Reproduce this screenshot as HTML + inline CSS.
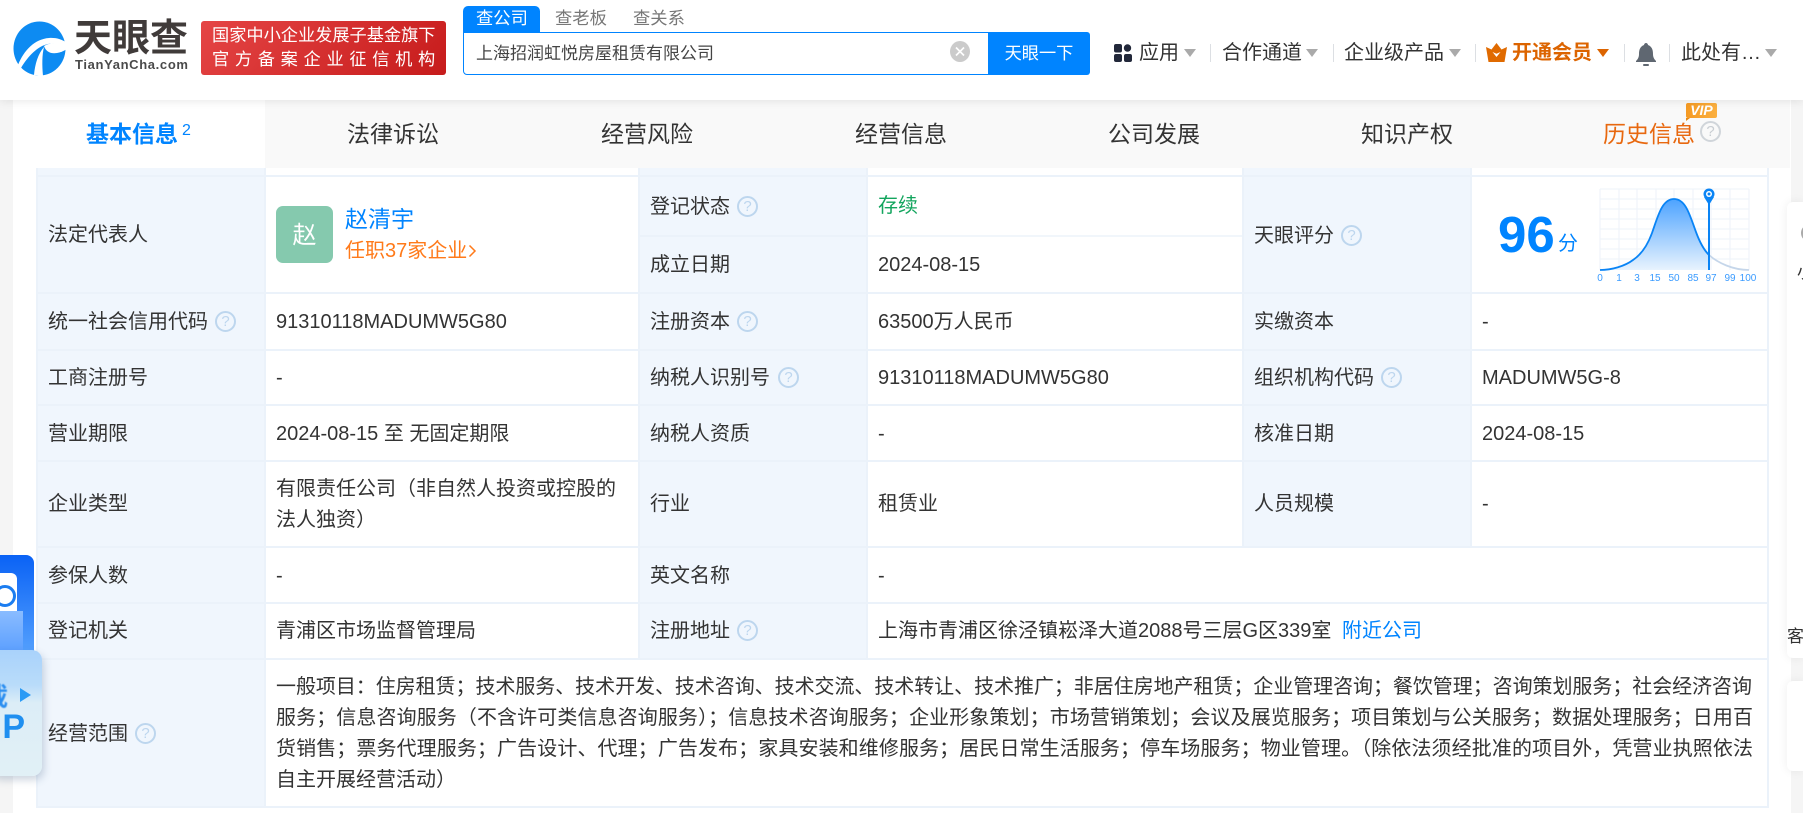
<!DOCTYPE html>
<html lang="zh-CN"><head><meta charset="utf-8"><title>天眼查</title>
<style>
*{box-sizing:border-box;margin:0;padding:0}
html,body{width:1803px;height:813px;overflow:hidden;background:#f5f5f5}
body{position:relative;font-family:"Liberation Sans","Noto Sans CJK SC",sans-serif;font-size:20px;color:#333}
.a{position:absolute}
.t{position:absolute;white-space:nowrap;line-height:30px;height:30px}
.h{position:absolute;width:21px;height:21px;border:2px solid #bdd6ee;border-radius:50%;color:#bdd6ee;font-size:15px;line-height:17px;text-align:center;font-weight:400}
.c{position:absolute;width:0;height:0;border-left:6px solid transparent;border-right:6px solid transparent;border-top:8px solid #aaa;top:49px}
.s{position:absolute;top:44px;width:1px;height:18px;background:#dcdfe3}
.hl{position:absolute;height:2px;background:#ebf2fa}
.vl{position:absolute;width:2px;background:#ebf2fa}
.lb{position:absolute;background:#f0f6fd}
.n{font-size:20px;color:#333}
.tb{font-size:23px;color:#333;text-align:center;width:120px}
</style></head><body>

<div class="a" style="left:13px;top:100px;width:1778px;height:713px;background:#fff"></div>
<!-- tab bar -->
<div class="a" style="left:13px;top:100px;width:1777px;height:68px;background:#f9f9f9"></div>
<div class="a" style="left:13px;top:100px;width:252px;height:68px;background:#fff"></div>
<div class="t" style="left:86px;top:119px;font-size:23px;font-weight:700;color:#0084ff">基本信息</div>
<div class="t" style="left:182px;top:116px;font-size:16px;color:#0084ff">2</div>
<div class="t tb" style="left:333px;top:119px">法律诉讼</div>
<div class="t tb" style="left:587px;top:119px">经营风险</div>
<div class="t tb" style="left:841px;top:119px">经营信息</div>
<div class="t tb" style="left:1094px;top:119px">公司发展</div>
<div class="t tb" style="left:1347px;top:119px">知识产权</div>
<div class="t tb" style="left:1589px;top:119px;color:#e8680f">历史信息</div>
<div class="h" style="left:1700px;top:121px;border-color:#d0d5da;color:#c8cdd2">?</div>
<div class="a" style="left:1686px;top:103px;width:31px;height:15px;background:linear-gradient(90deg,#f59a23,#fbb040);border-radius:2px;color:#fff;font:italic 700 14px/15px 'Liberation Sans',sans-serif;text-align:center">VIP</div>
<div class="a" style="left:1686px;top:118px;width:0;height:0;border-top:3px solid #e88a14;border-right:4px solid transparent"></div>

<!-- table backgrounds -->
<div class="lb" style="left:36px;top:168px;width:228px;height:639px"></div>
<div class="lb" style="left:638px;top:168px;width:229px;height:491px"></div>
<div class="lb" style="left:1242px;top:168px;width:229px;height:378px"></div>
<!-- lines -->
<div class="hl" style="left:36px;top:175px;width:1733px"></div>
<div class="hl" style="left:638px;top:235px;width:229px"></div>
<div class="hl" style="left:867px;top:235px;width:375px;background:#f1f6fb"></div>
<div class="hl" style="left:36px;top:292px;width:1733px"></div>
<div class="hl" style="left:36px;top:349px;width:1733px"></div>
<div class="hl" style="left:36px;top:404px;width:1733px"></div>
<div class="hl" style="left:36px;top:460px;width:1733px"></div>
<div class="hl" style="left:36px;top:546px;width:1733px"></div>
<div class="hl" style="left:36px;top:602px;width:1733px"></div>
<div class="hl" style="left:36px;top:658px;width:1733px"></div>
<div class="hl" style="left:36px;top:806px;width:1733px"></div>
<div class="vl" style="left:36px;top:168px;height:640px"></div>
<div class="vl" style="left:264px;top:168px;height:640px"></div>
<div class="vl" style="left:638px;top:168px;height:491px"></div>
<div class="vl" style="left:866px;top:168px;height:491px"></div>
<div class="vl" style="left:1242px;top:168px;height:379px"></div>
<div class="vl" style="left:1470px;top:168px;height:379px"></div>
<div class="vl" style="left:1767px;top:168px;height:640px"></div>

<!-- column 1 -->
<div class="t" style="left:48px;top:220px">法定代表人</div>
<div class="a" style="left:276px;top:206px;width:57px;height:57px;background:#85c9ae;border-radius:7px;color:#fff;font-size:24px;line-height:59px;text-align:center">赵</div>
<div class="t" style="left:345px;top:204px;font-size:23px;color:#0084ff">赵清宇</div>
<div class="t" style="left:345px;top:236px;color:#ff7a1a">任职37家企业</div>
<svg class="a" style="left:468px;top:244px" width="9" height="14" viewBox="0 0 9 14"><path d="M1.500 1.500L7 7L1.500 12.500" fill="none" stroke="#ff7a1a" stroke-width="1.500"/></svg>
<div class="t" style="left:48px;top:307px">统一社会信用代码</div><div class="h" style="left:215px;top:311px">?</div>
<div class="t" style="left:276px;top:307px">91310118MADUMW5G80</div>
<div class="t" style="left:48px;top:363px">工商注册号</div><div class="t" style="left:276px;top:363px">-</div>
<div class="t" style="left:48px;top:419px">营业期限</div><div class="t" style="left:276px;top:419px">2024-08-15 至 无固定期限</div>
<div class="t" style="left:48px;top:489px">企业类型</div>
<div class="t" style="left:276px;top:474px">有限责任公司（非自然人投资或控股的</div>
<div class="t" style="left:276px;top:505px">法人独资）</div>
<div class="t" style="left:48px;top:561px">参保人数</div><div class="t" style="left:276px;top:561px">-</div>
<div class="t" style="left:48px;top:616px">登记机关</div><div class="t" style="left:276px;top:616px">青浦区市场监督管理局</div>
<div class="t" style="left:48px;top:719px">经营范围</div><div class="h" style="left:135px;top:723px">?</div>

<!-- column 2 -->
<div class="t" style="left:650px;top:192px">登记状态</div><div class="h" style="left:737px;top:196px">?</div>
<div class="t" style="left:878px;top:191px;color:#13a55e">存续</div>
<div class="t" style="left:650px;top:250px">成立日期</div><div class="t" style="left:878px;top:250px">2024-08-15</div>
<div class="t" style="left:650px;top:307px">注册资本</div><div class="h" style="left:737px;top:311px">?</div>
<div class="t" style="left:878px;top:307px">63500万人民币</div>
<div class="t" style="left:650px;top:363px">纳税人识别号</div><div class="h" style="left:778px;top:367px">?</div>
<div class="t" style="left:878px;top:363px">91310118MADUMW5G80</div>
<div class="t" style="left:650px;top:419px">纳税人资质</div><div class="t" style="left:878px;top:419px">-</div>
<div class="t" style="left:650px;top:489px">行业</div><div class="t" style="left:878px;top:489px">租赁业</div>
<div class="t" style="left:650px;top:561px">英文名称</div><div class="t" style="left:878px;top:561px">-</div>
<div class="t" style="left:650px;top:616px">注册地址</div><div class="h" style="left:737px;top:620px">?</div>
<div class="t" style="left:878px;top:616px">上海市青浦区徐泾镇崧泽大道2088号三层G区339室</div>
<div class="t" style="left:1342px;top:616px;color:#0084ff">附近公司</div>

<!-- column 3 -->
<div class="t" style="left:1254px;top:221px">天眼评分</div><div class="h" style="left:1341px;top:225px">?</div>
<div class="t" style="left:1254px;top:307px">实缴资本</div><div class="t" style="left:1482px;top:307px">-</div>
<div class="t" style="left:1254px;top:363px">组织机构代码</div><div class="h" style="left:1381px;top:367px">?</div>
<div class="t" style="left:1482px;top:363px">MADUMW5G-8</div>
<div class="t" style="left:1254px;top:419px">核准日期</div><div class="t" style="left:1482px;top:419px">2024-08-15</div>
<div class="t" style="left:1254px;top:489px">人员规模</div><div class="t" style="left:1482px;top:489px">-</div>

<!-- score -->
<div class="a" style="left:1498px;top:206px;font-size:51px;font-weight:700;line-height:58px;color:#0084ff;white-space:nowrap">96</div>
<div class="t" style="left:1558px;top:229px;color:#0084ff">分</div>
<svg class="a" style="left:1590px;top:180px" width="175" height="110" viewBox="1590 180 175 110">
<defs><linearGradient id="g" x1="0" y1="0" x2="0" y2="1"><stop offset="0" stop-color="#4da3ff"/><stop offset="1" stop-color="#e8f3fe"/></linearGradient></defs>
<g stroke="#f0f5fa" stroke-width="1.300" fill="none">
<path d="M1600 189H1749M1600 199H1749M1600 209H1749M1600 219H1749M1600 229H1749M1600 239H1749M1600 249H1749M1600 259H1749"/>
<path d="M1600 189V270M1619 189V270M1637 189V270M1656 189V270M1674 189V270M1693 189V270M1711 189V270M1730 189V270M1749 189V270"/>
</g>
<path d="M1600 270C1612 270 1625 266 1633 260C1642 254 1648 244 1652 233C1658 216 1662 199 1674 199C1686 199 1690 216 1696 232C1700 243 1704 250 1709 255V270Z" fill="url(#g)"/>
<path d="M1600 270C1612 270 1625 266 1633 260C1642 254 1648 244 1652 233C1658 216 1662 199 1674 199C1686 199 1690 216 1696 232C1700 243 1704 250 1709 255" fill="none" stroke="#0a84f5" stroke-width="1.800"/>
<path d="M1709 255C1718 263 1733 270 1749 270" fill="none" stroke="#c5d6ea" stroke-width="1.800"/>
<path d="M1709 195V270" stroke="#0a84f5" stroke-width="2"/>
<circle cx="1709" cy="194" r="5.500" fill="#0a84f5"/><circle cx="1709" cy="194" r="3" fill="#fff"/><circle cx="1709" cy="194" r="1.500" fill="#0a84f5"/>
<path d="M1704 197L1709 205L1714 197Z" fill="#0a84f5"/>
<g font-family="Liberation Sans,sans-serif" font-size="10" fill="#3a9bff" text-anchor="middle">
<text x="1600" y="281">0</text><text x="1619" y="281">1</text><text x="1637" y="281">3</text><text x="1655" y="281">15</text><text x="1674" y="281">50</text><text x="1693" y="281">85</text><text x="1711" y="281">97</text><text x="1730" y="281">99</text><text x="1748" y="281">100</text></g>
</svg>

<!-- scope -->
<div class="t" style="left:276px;top:672px;width:1477px;letter-spacing:-.055px">一般项目：住房租赁；技术服务、技术开发、技术咨询、技术交流、技术转让、技术推广；非居住房地产租赁；企业管理咨询；餐饮管理；咨询策划服务；社会经济咨询</div>
<div class="t" style="left:276px;top:703px;width:1477px;text-align:justify;text-align-last:justify">服务；信息咨询服务（不含许可类信息咨询服务）；信息技术咨询服务；企业形象策划；市场营销策划；会议及展览服务；项目策划与公关服务；数据处理服务；日用百</div>
<div class="t" style="left:276px;top:734px;width:1477px;text-align:justify;text-align-last:justify">货销售；票务代理服务；广告设计、代理；广告发布；家具安装和维修服务；居民日常生活服务；停车场服务；物业管理。（除依法须经批准的项目外，凭营业执照依法</div>
<div class="t" style="left:276px;top:765px">自主开展经营活动）</div>

<!-- right sidebar -->
<div class="a" style="left:1787px;top:202px;width:16px;height:456px;background:#fff;box-shadow:0 0 10px rgba(0,0,0,.07);border-radius:6px 0 0 6px;overflow:hidden">
<div class="a" style="left:14px;top:22px;width:18px;height:18px;border:3px solid #aaa;border-radius:50%"></div>
<div class="t" style="left:10px;top:56px;font-size:17px">小</div>
<div class="t" style="left:0;top:420px;font-size:17px">客服</div>
</div>
<div class="a" style="left:1787px;top:681px;width:16px;height:90px;background:#fff;box-shadow:0 0 10px rgba(0,0,0,.07);border-radius:6px 0 0 6px"></div>

<!-- left floating -->
<div class="a" style="left:-10px;top:555px;width:44px;height:110px;border-radius:8px;background:linear-gradient(180deg,#0a62f5,#5da8ff);overflow:hidden">
<div class="a" style="left:0;top:56px;width:33px;height:54px;background:linear-gradient(180deg,#8abcff,#4d96ff)"></div>
<div class="a" style="left:0;top:18px;width:27px;height:38px;background:#fff;border-radius:6px 6px 0 0"></div>
<div class="a" style="left:4px;top:30px;width:22px;height:22px;border:3px solid #1c7df0;border-radius:50%"></div>
</div>
<div class="a" style="left:-10px;top:650px;width:52px;height:126px;border-radius:10px;background:linear-gradient(180deg,#a9d2fb 0,#b9dcfa 28%,#dcedf7 42%,#e1f0f6 100%);box-shadow:2px 4px 8px rgba(60,90,130,.25);overflow:hidden">
<div class="a" style="left:-8px;top:32px;font-size:26px;font-weight:700;line-height:30px;color:#2b8ef0;filter:blur(.6px)">载</div>
<div class="a" style="left:30px;top:38px;width:0;height:0;border-left:11px solid #2b9bf5;border-top:7px solid transparent;border-bottom:7px solid transparent"></div>
<div class="a" style="left:-7px;top:59px;font-size:34px;font-weight:700;line-height:36px;color:#1f8ff0;white-space:nowrap;width:42px;text-align:right">P</div>
</div>

<!-- header -->
<div class="a" style="left:0;top:0;width:1803px;height:100px;background:#fff;box-shadow:0 2px 8px rgba(0,0,0,.08)"></div>
<svg class="a" style="left:13px;top:21px" width="54" height="55" viewBox="0 0 54 55">
<ellipse cx="26.500" cy="27.500" rx="26" ry="27" fill="#0d8bf2"/>
<path d="M5 44C11 29 22 18 36 17C42 16.500 49 18 54 22V25C47 22 41 22 35 23C25 25 15 35 8 47Z" fill="#fff"/>
<path d="M31 25C33 31 38 33 44 32C47 31.500 51 30 54 28V24C47 21.500 38 21 31 25Z" fill="#fff"/>
<path d="M21 54C22 43 25 33 31 26C29 34 29 44 30 55Z" fill="#fff"/>
</svg>
<div class="a" style="left:74px;top:17px;font-size:38px;font-weight:700;line-height:44px;color:#403b3a;white-space:nowrap">天眼查</div>
<div class="a" style="left:75px;top:57px;font-size:13px;line-height:16px;letter-spacing:.65px;color:#4a4a4a;font-weight:700;white-space:nowrap">TianYanCha.com</div>
<div class="a" style="left:201px;top:21px;width:245px;height:54px;border-radius:3px;background:linear-gradient(135deg,#e54545,#c61b1b);color:#fff"></div>
<div class="t" style="left:212px;top:20px;font-size:17.200px;color:#fff">国家中小企业发展子基金旗下</div>
<div class="t" style="left:212px;top:44px;font-size:17.200px;color:#fff;letter-spacing:5.700px">官方备案企业征信机构</div>

<div class="a" style="left:463px;top:6px;width:77px;height:27px;background:#0084ff;border-radius:5px 5px 0 0"></div>
<div class="t" style="left:476px;top:3px;font-size:17.300px;color:#fff">查公司</div>
<div class="t" style="left:555px;top:3px;font-size:17.300px;color:#777">查老板</div>
<div class="t" style="left:633px;top:3px;font-size:17.300px;color:#777">查关系</div>
<div class="a" style="left:463px;top:32px;width:528px;height:43px;border:1px solid #0084ff;border-radius:0 0 0 4px;background:#fff"></div>
<div class="t" style="left:476px;top:39px;font-size:17px;color:#444">上海招润虹悦房屋租赁有限公司</div>
<div class="a" style="left:950px;top:41px;width:20px;height:21px;border-radius:50%;background:#cbcbcb"></div>
<svg class="a" style="left:950px;top:41px" width="20" height="21" viewBox="0 0 20 21"><path d="M6 6.500L14 14.500M14 6.500L6 14.500" stroke="#fff" stroke-width="1.700"/></svg>
<div class="a" style="left:988px;top:32px;width:102px;height:43px;background:#0084ff;border-radius:0 3px 3px 0;color:#fff;font-size:17.200px;line-height:42px;text-align:center">天眼一下</div>

<svg class="a" style="left:1114px;top:44px" width="18" height="18" viewBox="0 0 18 18" fill="#22283a"><rect x="0" y="0" width="8" height="8.500" rx="2"/><circle cx="13.500" cy="4" r="3.700"/><rect x="0" y="10" width="8" height="8" rx="2"/><rect x="10" y="10" width="8" height="8" rx="2"/></svg>
<div class="t n" style="left:1139px;top:38px">应用</div><div class="c" style="left:1184px"></div><div class="s" style="left:1210px"></div>
<div class="t n" style="left:1222px;top:38px">合作通道</div><div class="c" style="left:1306px"></div><div class="s" style="left:1333px"></div>
<div class="t n" style="left:1344px;top:38px">企业级产品</div><div class="c" style="left:1449px"></div><div class="s" style="left:1475px"></div>
<svg class="a" style="left:1486px;top:43px" width="21" height="19" viewBox="0 0 21 19"><path d="M0 4L5.500 6.500L10.500 0L15.500 6.500L21 4L18.500 19H2.500Z" fill="#e06a00"/><path d="M6.500 9L10.500 14L14.500 9L10.500 10.800Z" fill="#fff"/></svg>
<div class="t n" style="left:1512px;top:38px;font-weight:700;color:#dc6400">开通会员</div>
<div class="a" style="left:1597px;top:49px;width:0;height:0;border-left:6px solid transparent;border-right:6px solid transparent;border-top:8px solid #dc6400"></div>
<div class="s" style="left:1624px"></div>
<svg class="a" style="left:1636px;top:43px" width="20" height="24" viewBox="0 0 20 24" fill="#5f6771"><path d="M10 0C11 0 12 1 12 2C16 3.500 17 7 17 11C17 14 18 16 20 18V19H0V18C2 16 3 14 3 11C3 7 4 3.500 8 2C8 1 9 0 10 0Z"/><rect x="7" y="21" width="6" height="2" rx="1"/></svg>
<div class="s" style="left:1669px"></div>
<div class="t n" style="left:1681px;top:38px">此处有…</div><div class="c" style="left:1765px"></div>
</body></html>
